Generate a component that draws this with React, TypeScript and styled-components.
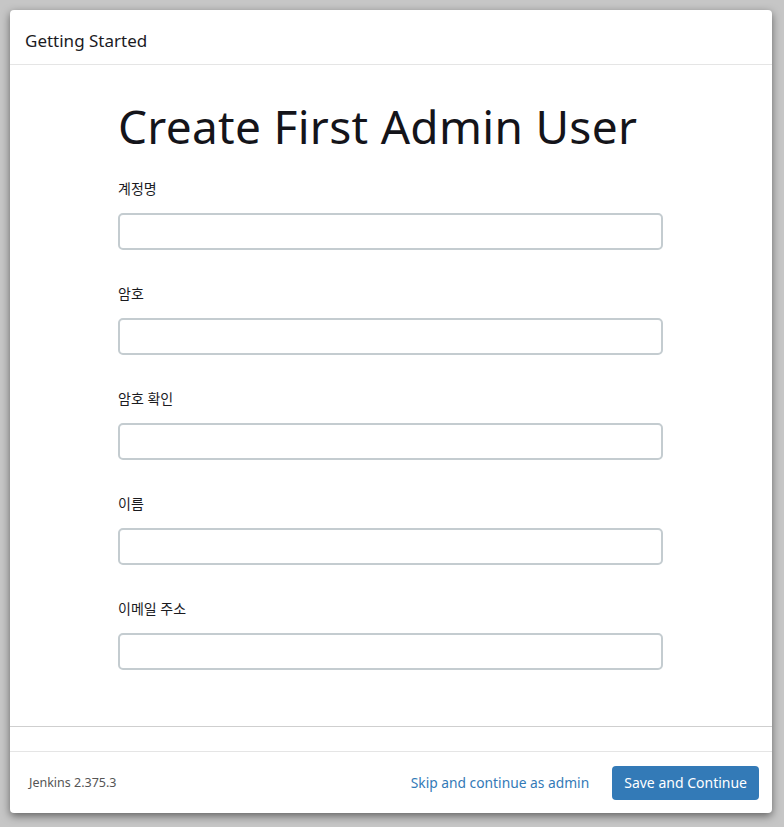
import styled, { createGlobalStyle } from 'styled-components';

const fields = ['계정명', '암호', '암호 확인', '이름', '이메일 주소'];

const GlobalStyle = createGlobalStyle`
  html, body {
    margin: 0;
    padding: 0;
    height: 100%;
    background: #c6c6c6;
  }
  body {
    font-family: 'Noto Sans', 'Noto Sans CJK KR', sans-serif;
    color: #1b1b1f;
  }
  #root {
    height: 100%;
  }
`;

const App: React.FC = () => {
  return (
    <>
      <GlobalStyle />
      <Page>
        <Modal>
          {/* 헤더 */}
          <Header>Getting Started</Header>

          {/* 본문 */}
          <Body>
            <Form>
              <Title>Create First Admin User</Title>
              {fields.map((label) => (
                <Field key={label}>
                  <Label>{label}</Label>
                  <Input type={label.startsWith('암호') ? 'password' : 'text'} />
                </Field>
              ))}
            </Form>
          </Body>

          <Spacer />

          {/* 하단 */}
          <Footer>
            <Version>Jenkins 2.375.3</Version>
            <Actions>
              <SkipLink href="#">Skip and continue as admin</SkipLink>
              <SaveButton>Save and Continue</SaveButton>
            </Actions>
          </Footer>
        </Modal>
      </Page>
    </>
  );
};

export default App;

/* ---------- styles ---------- */
const Page = styled.div`
  box-sizing: border-box;
  height: 827px;
  padding: 10px 12px 14px 10px;
  display: flex;
`;

const Modal = styled.div`
  flex: 1;
  display: flex;
  flex-direction: column;
  background: #fff;
  border-radius: 4px;
  box-shadow: 0 3px 9px rgba(0, 0, 0, 0.5);
  overflow: hidden;
`;

const Header = styled.div`
  height: 55px;
  box-sizing: border-box;
  display: flex;
  align-items: center;
  padding: 6px 15px 0;
  border-bottom: 1px solid #e5e5e5;
  font-size: 17px;
  color: #1b1b1f;
`;

const Body = styled.div`
  flex: 1;
  border-bottom: 1px solid #cfcfcf;
  padding: 0 108px;
`;

const Form = styled.div`
  width: 545px;
`;

const Title = styled.h1`
  margin: 33px 0 25px;
  font-size: 46px;
  font-weight: 400;
  line-height: 56px;
  letter-spacing: 0.3px;
  color: #14141a;
`;

const Field = styled.div`
  display: flex;
  flex-direction: column;
  margin-bottom: 34px;
`;

const Label = styled.label`
  font-size: 14px;
  line-height: 20px;
  margin-bottom: 14px;
  color: #1b1b1f;
`;

const Input = styled.input`
  box-sizing: border-box;
  height: 37px;
  width: 100%;
  border: 2px solid #c4ccd0;
  border-radius: 5px;
  padding: 0 10px;
  font-size: 14px;
  outline: none;
`;

const Spacer = styled.div`
  height: 24px;
  border-bottom: 1px solid #e5e5e5;
`;

const Footer = styled.div`
  height: 61px;
  display: flex;
  align-items: center;
  justify-content: space-between;
  padding: 0 13px 0 19px;
`;

const Version = styled.span`
  font-size: 12.5px;
  color: #555;
`;

const Actions = styled.div`
  display: flex;
  align-items: center;
  gap: 23px;
`;

const SkipLink = styled.a`
  font-size: 13.8px;
  color: #337ab7;
  text-decoration: none;
`;

const SaveButton = styled.button`
  height: 34px;
  padding: 0 12px;
  border: none;
  border-radius: 4px;
  background: #337ab7;
  color: #fff;
  font-family: inherit;
  font-size: 14px;
`;
